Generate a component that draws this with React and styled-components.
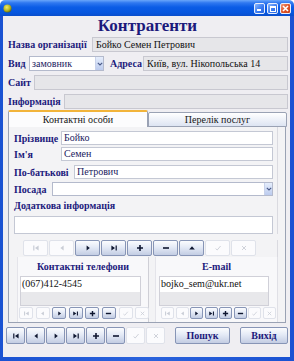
import React from 'react';
import styled, { createGlobalStyle } from 'styled-components';

const GlobalStyle = createGlobalStyle`
  html, body { margin: 0; padding: 0; background: #ffffff; }
  body { font-family: "Liberation Serif", "Times New Roman", serif; }
  * { box-sizing: border-box; }
`;

const Glyph = function ({ name, size }) {
  const s = size || 8;
  const shapes = {
    first: <path d="M1.2 1.6h1.2v4.8H1.2z M6.6 1.6 L3 4 L6.6 6.4z" />,
    prior: <path d="M5.6 1.6 L2.4 4 L5.6 6.4z" />,
    next: <path d="M2.6 1.6 L5.8 4 L2.6 6.4z" />,
    last: <path d="M1.4 1.6 L5 4 L1.4 6.4z M5.6 1.6h1.2v4.8H5.6z" />,
    plus: <path d="M3.2 1h1.6v2.2H7v1.6H4.8V7H3.2V4.8H1V3.2h2.2z" />,
    minus: <path d="M1 3.2h6v1.6H1z" />,
    up: <path d="M4 2.2 L6.8 5.4 H1.2z" />,
    post: <path d="M1.6 4.6 L3.2 6 L6.6 2" fill="none" stroke="currentColor" strokeWidth="0.9" />,
    cancel: <path d="M2 2 L6 6 M6 2 L2 6" fill="none" stroke="currentColor" strokeWidth="0.9" />,
  };
  return (
    <svg width={s} height={s} viewBox="0 0 8 8" fill="currentColor">
      {shapes[name]}
    </svg>
  );
};

const NavButton = function ({ icon, disabled, w, h }) {
  return (
    <NavBtn $disabled={disabled} $w={w} $h={h}>
      <Glyph name={icon} size={h < 14 ? 7 : 8} />
    </NavBtn>
  );
};

const Navigator = function ({ items, w, h, gap }) {
  return (
    <NavRow $gap={gap}>
      {items.map(([icon, disabled], i) => (
        <NavButton key={i} icon={icon} disabled={disabled} w={w} h={h} />
      ))}
    </NavRow>
  );
};

const Chevron = function () {
  return (
    <svg width="6" height="4" viewBox="0 0 6 4">
      <path d="M0.8 0.8 L3 3 L5.2 0.8" fill="none" stroke="#4a5a88" strokeWidth="1.1" />
    </svg>
  );
};

const panelNav = [
  ['first', true], ['prior', true], ['next'], ['last'], ['plus'], ['minus'], ['up'], ['post', true], ['cancel', true],
];
const smallNav = [
  ['first', true], ['prior', true], ['next'], ['last'], ['plus'], ['minus'], ['post', true], ['cancel', true],
];
const bottomNav = [
  ['first'], ['prior'], ['next'], ['last'], ['plus'], ['minus'], ['post', true], ['cancel', true],
];

const App = function () {
  return (
    <>
      <GlobalStyle />
      <Window>
        <TitleBar>
          <AppIcon>
            <svg width="9" height="9" viewBox="0 0 10 10">
              <defs>
                <radialGradient id="ic" cx="0.4" cy="0.35" r="0.7">
                  <stop offset="0" stopColor="#f2ec6a" />
                  <stop offset="0.6" stopColor="#b6b420" />
                  <stop offset="1" stopColor="#56620c" />
                </radialGradient>
              </defs>
              <circle cx="5" cy="5" r="4.5" fill="url(#ic)" />
            </svg>
          </AppIcon>
          <Controls>
            <CtrlBtn><MinMark /></CtrlBtn>
            <CtrlBtn><MaxMark /></CtrlBtn>
            <CtrlBtn $close>
              <svg width="7" height="7" viewBox="0 0 7 7">
                <path d="M1 1 L6 6 M6 1 L1 6" stroke="#fff" strokeWidth="1.6" />
              </svg>
            </CtrlBtn>
          </Controls>
        </TitleBar>

        <Frame>
          <Client>
            <Heading>Контрагенти</Heading>

            <TopForm>
              <Row>
                <Label $w={84}>Назва організації</Label>
                <ReadInput>Бойко Семен Петрович</ReadInput>
              </Row>
              <Row>
                <Label $w={21}>Вид</Label>
                <Combo $w={75}>
                  <ComboText>замовник</ComboText>
                  <ComboButton><Chevron /></ComboButton>
                </Combo>
                <Label $w={33} $offset={6}>Адреса</Label>
                <ReadInput>Київ, вул. Нікопольська 14</ReadInput>
              </Row>
              <Row>
                <Label $w={26}>Сайт</Label>
                <ReadInput />
              </Row>
              <Row>
                <Label $w={56}>Інформація</Label>
                <ReadInput />
              </Row>
            </TopForm>

            <TabBar>
              <Tab $active $w={140}>Контактні особи</Tab>
              <Tab $w={139}>Перелік послуг</Tab>
            </TabBar>

            <Panel>
              <PersonSection>
                <PersonRow $h={14}>
                  <Label $w={47}>Прізвище</Label>
                  <EditInput>Бойко</EditInput>
                </PersonRow>
                <PersonRow $h={14} $mt={2}>
                  <Label $w={47}>Ім'я</Label>
                  <EditInput>Семен</EditInput>
                </PersonRow>
                <PersonRow $h={14} $mt={4}>
                  <Label $w={60}>По-батькові</Label>
                  <EditInput>Петрович</EditInput>
                </PersonRow>
                <PersonRow $h={14} $mt={3}>
                  <Label $w={38}>Посада</Label>
                  <Combo $flex>
                    <ComboText />
                    <ComboButton><Chevron /></ComboButton>
                  </Combo>
                </PersonRow>
                <BlockLabel>Додаткова інформація</BlockLabel>
                <MemoBox />
              </PersonSection>

              <PanelNavBar>
                <Navigator items={panelNav} w={25} h={16} gap={1} />
              </PanelNavBar>

              <DetailSplit>
                <Group $w={132} $divider>
                  <GroupTitle>Контактні телефони</GroupTitle>
                  <Grid $ml={2} $w={121}>
                    <GridRow>(067)412-4545</GridRow>
                  </Grid>
                  <SmallNavBar $ml={1}>
                    <Navigator items={smallNav} w={14} h={12} gap={2.6} />
                  </SmallNavBar>
                </Group>
                <Group $ml={6}>
                  <GroupTitle>E-mail</GroupTitle>
                  <Grid $ml={3} $w={110}>
                    <GridRow>bojko_sem@ukr.net</GridRow>
                  </Grid>
                  <SmallNavBar $ml={5}>
                    <Navigator items={smallNav} w={13} h={12} gap={1.5} />
                  </SmallNavBar>
                </Group>
              </DetailSplit>
            </Panel>

            <Toolbar>
              <Navigator items={bottomNav} w={19} h={17} gap={1} />
              <ActionButton $w={55} $ml={10}>Пошук</ActionButton>
              <ActionButton $w={48} $ml={10}>Вихід</ActionButton>
            </Toolbar>
          </Client>
        </Frame>
      </Window>
    </>
  );
};

export default App;

const Window = styled.div`
  width: 294px;
  height: 361px;
  display: flex;
  flex-direction: column;
`;

const TitleBar = styled.div`
  height: 16px;
  flex: none;
  display: flex;
  align-items: center;
  justify-content: space-between;
  padding: 0 3px 0 3px;
  border-radius: 5px 5px 0 0;
  background: linear-gradient(to bottom, #6aa6fa 0%, #2f78f0 18%, #0b5ce6 45%, #0656de 80%, #0a4ecb 100%);
`;

const AppIcon = styled.div`
  width: 9px;
  height: 9px;
  display: flex;
  margin-top: 1px;
`;

const Controls = styled.div`
  display: flex;
  gap: 2px;
  margin-top: 1px;
`;

const CtrlBtn = styled.div`
  width: 11px;
  height: 11px;
  border: 1px solid #e8eefc;
  border-radius: 2px;
  display: flex;
  align-items: center;
  justify-content: center;
  position: relative;
  background: ${(p) => (p.$close
    ? 'linear-gradient(135deg, #f09a78 0%, #e0562a 50%, #c8401a 100%)'
    : 'linear-gradient(135deg, #8cb8fc 0%, #3a7cf2 55%, #2462de 100%)')};
`;

const MinMark = styled.div`
  width: 4px;
  height: 2px;
  background: #fff;
  position: absolute;
  left: 2px;
  bottom: 2px;
`;

const MaxMark = styled.div`
  width: 6px;
  height: 6px;
  border: 1px solid #fff;
  border-top-width: 2px;
`;

const Frame = styled.div`
  flex: 1;
  display: flex;
  padding: 0 4px 4px 3px;
  background: linear-gradient(to right, #1a52d2, #2a62dc 50%, #1a52d2);
`;

const Client = styled.div`
  flex: 1;
  display: flex;
  flex-direction: column;
  background: #efeef2;
`;

const Heading = styled.div`
  height: 19px;
  line-height: 19px;
  text-align: center;
  font-size: 17px;
  font-weight: bold;
  color: #1c1a7c;
  padding-left: 2px;
`;

const TopForm = styled.div`
  display: flex;
  flex-direction: column;
  gap: 4px;
  margin-top: 2px;
  padding: 0 2px 0 5px;
`;

const Row = styled.div`
  display: flex;
  align-items: center;
  height: 15px;
`;

const Label = styled.div`
  width: ${(p) => p.$w}px;
  margin-left: ${(p) => p.$offset || 0}px;
  flex: none;
  font-size: 10px;
  font-weight: bold;
  color: #1c1a7c;
  white-space: nowrap;
`;

const ReadInput = styled.div`
  flex: 1;
  height: 100%;
  background: #e6e6e9;
  border: 1px solid #c8c8d0;
  font-size: 10px;
  color: #111;
  padding-left: 3px;
  line-height: 13px;
  white-space: nowrap;
  overflow: hidden;
`;

const Combo = styled.div`
  width: ${(p) => (p.$w ? `${p.$w}px` : 'auto')};
  flex: ${(p) => (p.$flex ? 1 : 'none')};
  height: 100%;
  display: flex;
  background: #ffffff;
  border: 1px solid #b4bacc;
`;

const ComboText = styled.div`
  flex: 1;
  font-size: 10px;
  color: #1a1a5e;
  padding-left: 2px;
  line-height: 13px;
`;

const ComboButton = styled.div`
  width: 8px;
  display: flex;
  align-items: center;
  justify-content: center;
  background: linear-gradient(to bottom, #e6eefc, #bccbee);
  border-left: 1px solid #c8d2ea;
`;

const TabBar = styled.div`
  display: flex;
  align-items: flex-end;
  height: 17px;
  margin-top: 1px;
  padding-left: 5px;
`;

const Tab = styled.div`
  width: ${(p) => p.$w}px;
  height: ${(p) => (p.$active ? 17 : 15)}px;
  font-size: 10px;
  color: #161616;
  text-align: center;
  line-height: ${(p) => (p.$active ? 15 : 14)}px;
  border: 1px solid #9aa2b4;
  border-bottom: ${(p) => (p.$active ? 'none' : '1px solid #9aa2b4')};
  border-top: ${(p) => (p.$active ? '2px solid #f2b43a' : '1px solid #9aa2b4')};
  border-radius: 2px 2px 0 0;
  background: ${(p) => (p.$active
    ? '#fcfcfd'
    : 'linear-gradient(to bottom, #ffffff, #dde4f2)')};
  position: relative;
  z-index: 1;
`;

const Panel = styled.div`
  width: 278px;
  height: 197px;
  margin-left: 5px;
  margin-top: -1px;
  display: flex;
  flex-direction: column;
  padding: 0 7px 0 0;
  background: #f3f3f5;
  border: 1px solid #9aa2b4;
`;

const PersonSection = styled.div`
  display: flex;
  flex-direction: column;
  padding: 4px 4px 0 5px;
  border-right: 1px solid #dadae0;
`;

const PersonRow = styled.div`
  display: flex;
  align-items: center;
  height: ${(p) => p.$h}px;
  margin-top: ${(p) => p.$mt || 0}px;
`;

const EditInput = styled.div`
  flex: 1;
  height: 100%;
  background: #ffffff;
  border: 1px solid #c4c8d4;
  font-size: 10px;
  color: #1a1a5e;
  padding-left: 2px;
  line-height: 12px;
`;

const BlockLabel = styled.div`
  margin-top: 3px;
  height: 14px;
  line-height: 14px;
  font-size: 10px;
  font-weight: bold;
  color: #1c1a7c;
`;

const MemoBox = styled.div`
  margin-top: 3px;
  height: 18px;
  background: #ffffff;
  border: 1px solid #c4c8d4;
`;

const PanelNavBar = styled.div`
  display: flex;
  margin-top: 6px;
  padding-left: 14px;
  padding-bottom: 1px;
  border-right: 1px solid #dadae0;
`;

const NavRow = styled.div`
  display: flex;
  gap: ${(p) => p.$gap}px;
`;

const NavBtn = styled.div`
  width: ${(p) => p.$w}px;
  height: ${(p) => p.$h}px;
  display: flex;
  align-items: center;
  justify-content: center;
  border-radius: 2px;
  color: ${(p) => (p.$disabled ? '#c9cdd6' : '#0e1630')};
  border: 1px solid ${(p) => (p.$disabled ? '#dfe2ea' : '#8795b6')};
  background: ${(p) => (p.$disabled
    ? '#fbfbfd'
    : 'linear-gradient(to bottom, #fbfcfe 0%, #e4eaf6 45%, #c3cde3 100%)')};
`;

const DetailSplit = styled.div`
  flex: 1;
  display: flex;
  padding-left: 8px;
`;

const Group = styled.div`
  width: ${(p) => (p.$w ? `${p.$w}px` : 'auto')};
  flex: ${(p) => (p.$w ? 'none' : 1)};
  margin-left: ${(p) => p.$ml || 0}px;
  display: flex;
  flex-direction: column;
  background: #f8f8fa;
  border-left: 1px solid #e4e4ea;
  border-right: 1px solid ${(p) => (p.$divider ? '#cfcfd6' : '#e0e0e6')};
`;

const GroupTitle = styled.div`
  height: 19px;
  line-height: 19px;
  text-align: center;
  font-size: 10px;
  font-weight: bold;
  color: #1c1a7c;
`;

const Grid = styled.div`
  width: ${(p) => p.$w}px;
  height: 30px;
  margin-left: ${(p) => p.$ml}px;
  background: #e8e8eb;
  border: 1px solid #d0d0d8;
`;

const GridRow = styled.div`
  height: 15px;
  background: #ffffff;
  font-size: 10px;
  color: #111;
  padding-left: 1px;
  line-height: 13px;
`;

const SmallNavBar = styled.div`
  display: flex;
  margin-top: 1px;
  margin-left: ${(p) => p.$ml}px;
`;

const Toolbar = styled.div`
  display: flex;
  align-items: center;
  margin-top: 4px;
  padding-left: 3px;
`;

const ActionButton = styled.div`
  width: ${(p) => p.$w}px;
  height: 17px;
  margin-left: ${(p) => p.$ml}px;
  display: flex;
  align-items: center;
  justify-content: center;
  font-size: 10px;
  font-weight: bold;
  color: #1c1a7c;
  border: 1px solid #8795b6;
  border-radius: 2px;
  background: linear-gradient(to bottom, #fbfcfe 0%, #e4eaf6 45%, #c3cde3 100%);
`;
